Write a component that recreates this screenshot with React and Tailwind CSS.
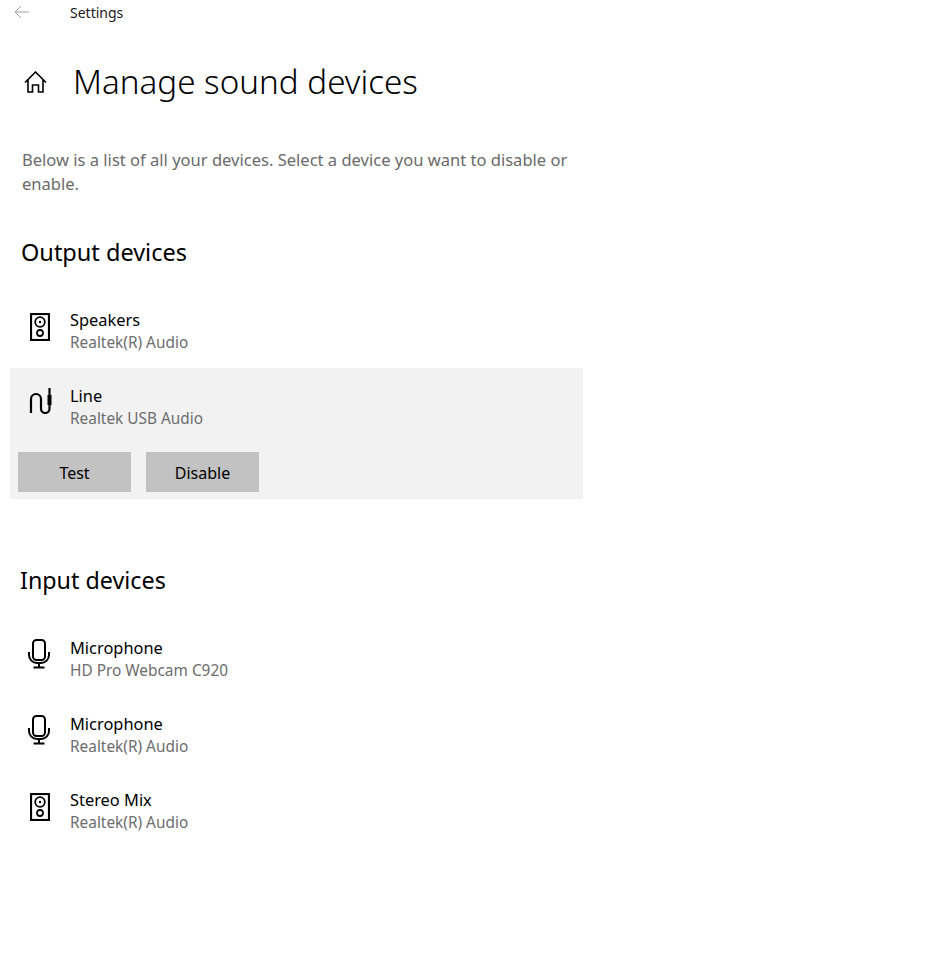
import React from 'react';

const SpeakerIcon = () => (
  <svg className="mt-px" width="20" height="28" viewBox="0 0 20 28" fill="none" stroke="#000" strokeWidth="2.2">
    <rect x="1" y="1" width="18" height="26" />
    <circle cx="10" cy="9" r="4.8" strokeWidth="1.8" />
    <circle cx="10" cy="9" r="1.2" fill="#000" stroke="none" />
    <circle cx="10" cy="20" r="3" strokeWidth="1.8" />
  </svg>
);

const MicIcon = () => (
  <svg className="-mt-px -translate-x-px" width="22" height="30" viewBox="0 0 22 30" fill="none" stroke="#000" strokeWidth="2">
    <rect x="5" y="1" width="12" height="20" rx="3.5" />
    <path d="M1 13v3a8 8 0 0 0 8 8h4a8 8 0 0 0 8-8v-3" />
    <path d="M11 24v4M5.5 28.5h11" />
  </svg>
);

const LineIcon = () => (
  <svg width="24" height="26" viewBox="0 0 24 26" fill="none" stroke="#000" strokeWidth="2.2">
    <path d="M3 25V11a5 5 0 0 1 10 0v9.75a4.25 4.25 0 0 0 8.5 0V15" />
    <rect x="19.5" y="7" width="4" height="10" fill="#000" stroke="none" />
    <path d="M21.5 0v8" />
  </svg>
);

function DeviceRow({ icon, title, subtitle }) {
  return (
    <div className="flex h-[76px] pl-5 pt-4">
      <div className="mr-[10px] flex w-10 justify-center pt-1">{icon}</div>
      <div>
        <div className="text-[16.4px] leading-6 text-black">{title}</div>
        <div className="text-[15.4px] leading-[21px] text-[#6d6d6d]">{subtitle}</div>
      </div>
    </div>
  );
}

export default function App() {
  return (
    <div className="h-[960px] w-[937px] bg-white font-['Noto_Sans','Open_Sans',sans-serif]">
      <div className="flex h-6 items-center pl-[14px]">
        <svg width="16" height="14" viewBox="0 0 16 14" fill="none" stroke="#a3a3a3" strokeWidth="1">
          <path d="M15 7H1M7 1 1 7l6 6" />
        </svg>
        <span className="ml-10 pt-px text-sm text-[#1a1a1a]">Settings</span>
      </div>

      <div className="mt-[33px] flex h-[50px] items-center pl-6">
        <svg width="23" height="22" viewBox="0 0 23 22" fill="none" stroke="#000" strokeWidth="1.6">
          <path d="M1 11.5 11.5 1 22 11.5M4 9v12h4.5v-7h6v7H19V9" />
        </svg>
        <h1 className="ml-[26px] text-[33.2px] font-light text-black">Manage sound devices</h1>
      </div>

      <p className="mt-[41px] w-[570px] pl-[22px] text-[16.55px] leading-6 text-[#6a6a6a]">
        Below is a list of all your devices. Select a device you want to disable or enable.
      </p>

      <h2 className="mt-10 h-8 pl-[21px] text-[23.5px] leading-8 font-normal text-black">Output devices</h2>

      <div className="mt-6">
        <DeviceRow icon={<SpeakerIcon />} title="Speakers" subtitle="Realtek(R) Audio" />
        <div className="ml-[10px] h-[131px] w-[573px] bg-[#f2f2f2]">
          <div className="-ml-[10px]">
            <DeviceRow icon={<LineIcon />} title="Line" subtitle="Realtek USB Audio" />
          </div>
          <div className="mt-2 flex gap-[15px] pl-2">
            <button className="h-10 w-[113px] bg-[#c2c2c2] pt-0.5 text-[16px] text-black">Test</button>
            <button className="h-10 w-[113px] bg-[#c2c2c2] pt-0.5 text-[16px] text-black">Disable</button>
          </div>
        </div>
      </div>

      <h2 className="mt-[65px] h-8 pl-5 text-[23.3px] leading-8 font-normal text-black">Input devices</h2>

      <div className="mt-6">
        <DeviceRow icon={<MicIcon />} title="Microphone" subtitle="HD Pro Webcam C920" />
        <DeviceRow icon={<MicIcon />} title="Microphone" subtitle="Realtek(R) Audio" />
        <DeviceRow icon={<SpeakerIcon />} title="Stereo Mix" subtitle="Realtek(R) Audio" />
      </div>
    </div>
  );
}
